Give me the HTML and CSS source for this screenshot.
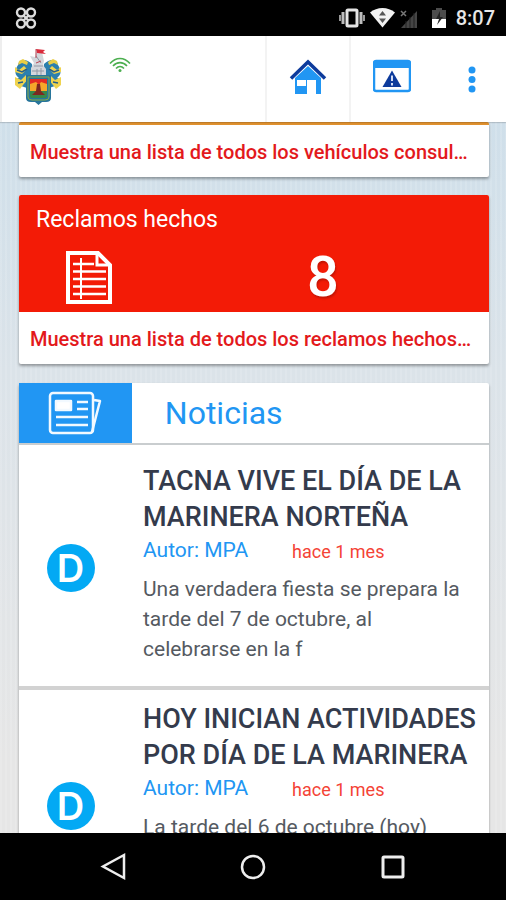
FILE: index.html
```
<!DOCTYPE html>
<html lang="es">
  <head>
    <meta charset="UTF-8" />
    <meta name="viewport" content="width=device-width, initial-scale=1.0" />
    <title>Noticias</title>
    <link rel="stylesheet" href="styles.css" />
  </head>
  <body>
    <div class="status-bar">
      <svg class="clover" width="26" height="24" viewBox="0 0 26 24" fill="none" stroke="#dcdcdc" stroke-width="2.4">
        <circle cx="8" cy="6.500" r="4" />
        <circle cx="18" cy="6.500" r="4" />
        <circle cx="8" cy="17.500" r="4" />
        <circle cx="18" cy="17.500" r="4" />
        <path d="M10 9l6 6M16 9l-6 6" />
      </svg>
      <div class="status-icons">
        <!-- vibrate -->
        <svg width="28" height="22" viewBox="0 0 28 22" fill="none">
          <rect x="9" y="3" width="10" height="16" rx="1" stroke="#e4e4e4" stroke-width="3" />
          <path d="M5 5v12M23 5v12" stroke="#bdbdbd" stroke-width="3" />
          <path d="M2 8v6M26 8v6" stroke="#9a9a9a" stroke-width="2" />
        </svg>
        <!-- wifi with traffic arrows -->
        <svg width="25" height="22" viewBox="0 0 25 22">
          <path d="M0 5.500C7-.500 18-.500 25 5.500L12.500 20.500z" fill="#f2f2f2" />
          <path d="M12.500 4l3.500 4.500H9zM12.500 16L9 11.500h7z" fill="#555" />
        </svg>
        <!-- no signal -->
        <svg width="20" height="22" viewBox="0 0 20 22">
          <path d="M18 4v17H2z" fill="#454545" />
          <path d="M7 14v7M11 10v11M15 6v15" stroke="#222" stroke-width="1" />
          <path d="M2 4l5 5M7 4l-5 5" stroke="#777" stroke-width="1.500" />
        </svg>
        <!-- battery -->
        <svg class="battery" width="16" height="22" viewBox="0 0 16 22">
          <path d="M1 3h4V1h6v2h4v9H1z" fill="#4c4c4c" />
          <path d="M1 12h14v9H1z" fill="#fff" />
          <path d="M9 4l-4 8h3l-2 6 6-8H9z" fill="#222" />
        </svg>
        <span class="clock">8:07</span>
      </div>
    </div>

    <header>
      <a class="logo" href="#" aria-label="Municipalidad">
        <svg width="48" height="58" viewBox="0 0 48 58">
          <!-- mantling -->
          <path d="M18 16C12 10 5 11 4 17c-4 6-3 10 1 13-5 1-4 9 2 8l6 2 6-14z" fill="#2b7fae" />
          <path d="M30 16c6-6 13-5 14 1 4 6 3 10-1 13 5 1 4 9-2 8l-6 2-6-14z" fill="#2b7fae" />
          <path d="M5 13l4-2 5 3-1 3-5-2-4 2zM43 13l-4-2-5 3 1 3 5-2 4 2z" fill="#e9cd45" />
          <path d="M1 19l4 3 5-4 3 3-5 5-7-2zM47 19l-4 3-5-4-3 3 5 5 7-2zM1 29l6 3 5-5 2 4-5 6-3 4-5-4zM47 29l-6 3-5-5-2 4 5 6 3 4 5-4z" fill="#efd34f" />
          <path d="M3 22l5 2 5-3M45 22l-5 2-5-3M4 35l5-1M44 35l-5-1" stroke="#245f8b" stroke-width="1.500" fill="none" />
          <!-- helmet, castle and flag -->
          <path d="M17 28v-8l3-5-4-7 5 1 1-5h6l2 9-1 4 3 4v7z" fill="#d4d7dc" />
          <path d="M20 18h9M18 23h12M22 8l5 7M23 21v6M27 20v7" stroke="#9298a5" stroke-width="1" />
          <path d="M22 1l9 1-2 2 3 2-9-1z" fill="#d92a3b" />
          <path d="M22 1v9M22 15l5-2" stroke="#b94755" stroke-width="1" />
          <!-- shield -->
          <path d="M12 27h25v23q0 4-5 4h-4l-3.500 3L21 54h-4q-5 0-5-4z" fill="#27759b" />
          <path d="M14 29h21v20q0 3-4 3H18q-4 0-4-3z" fill="none" stroke="#8bad46" stroke-width="1" />
          <path d="M16 31h17v12H16z" fill="#f6a72a" />
          <path d="M16 31h17v5l-6-2-2 3-3-3-6 2z" fill="#e42b24" />
          <path d="M16 43h17v5q0 2-3 2H19q-3 0-3-2z" fill="#35874a" />
          <path d="M23 36h3l1 7 4 4H18l4-4z" fill="#7d2820" />
        </svg>
      </a>
      <svg class="wifi" width="22" height="16" viewBox="0 0 22 16" fill="none" stroke="#4caf50" stroke-width="1.600">
        <path d="M1 6.500C7-.200 15-.200 21 6.500M4 9c4-4.500 10-4.500 14 0M7 11.500c2.500-2.700 5.500-2.700 8 0" />
        <circle cx="11" cy="13.500" r="1.500" fill="#4caf50" stroke="none" />
      </svg>
      <nav>
        <button type="button" aria-label="Inicio">
          <svg width="38" height="36" viewBox="0 0 38 36">
            <path d="M6 19L19 7l13 12v16h-5V21h-9v14H6z" fill="#2196f3" />
            <path d="M8 21h9v6H8z" fill="#fff" />
            <path d="M2 19.500L19 3l17 16.500" fill="none" stroke="#0d3b9c" stroke-width="3.500" />
          </svg>
        </button>
        <button type="button" aria-label="Alertas">
          <svg width="38" height="34" viewBox="0 0 38 34">
            <rect x="1" y="2" width="36" height="30" rx="2" fill="#fff" stroke="#2196f3" stroke-width="2.500" />
            <path d="M1 2h36v7H1z" fill="#2196f3" />
            <path d="M19 11.500L28.500 28h-19z" fill="#0d3b9c" />
            <path d="M19 16.500v5.500M19 24v2.500" stroke="#d5def4" stroke-width="2" />
          </svg>
        </button>
        <button type="button" class="more" aria-label="Menú">
          <svg width="8" height="28" viewBox="0 0 8 28" fill="#2196f3">
            <circle cx="4" cy="4" r="3.500" />
            <circle cx="4" cy="13.500" r="3.500" />
            <circle cx="4" cy="23" r="3.500" />
          </svg>
        </button>
      </nav>
    </header>

    <main>
      <section class="card vehicles">
        <p class="card-note">Muestra una lista de todos los vehículos consul…</p>
      </section>

      <section class="card claims">
        <div class="claims-head">
          <h2>Reclamos hechos</h2>
          <div class="claims-body">
            <svg width="46" height="53" viewBox="0 0 46 53" fill="none" stroke="#fff">
              <path d="M2 2h30l12 12v37H2z" stroke-width="4" />
              <path d="M31 2v12h13" stroke-width="3" />
              <path d="M7 13h21M7 20.500h33M7 28h33M7 35.500h33M7 43h33" stroke-width="2.400" />
              <path d="M15 7v41" stroke-width="2" />
            </svg>
            <strong>8</strong>
          </div>
        </div>
        <p class="card-note">Muestra una lista de todos los reclamos hechos…</p>
      </section>

      <section class="card news">
        <div class="news-head">
          <div class="news-icon">
            <svg width="54" height="44" viewBox="0 0 54 44" fill="none" stroke="#f2f9ff" stroke-width="2.500" stroke-linejoin="round">
              <rect x="2" y="2" width="43" height="40" rx="3" />
              <path d="M46 9l6 1-8 31" />
              <path d="M8 10h15v9H8z" fill="#fff" />
              <path d="M29 11h11M29 18h11M8 26h32M8 34h32" />
            </svg>
          </div>
          <h2>Noticias</h2>
        </div>

        <article>
          <div class="avatar"><span>D</span></div>
          <div class="news-text">
            <h3>TACNA VIVE EL DÍA DE LA MARINERA NORTEÑA</h3>
            <div class="meta">
              <a href="#">Autor: MPA</a>
              <time>hace 1 mes</time>
            </div>
            <p>Una verdadera fiesta se prepara la tarde del 7 de octubre, al celebrarse en la f</p>
          </div>
        </article>

        <article>
          <div class="avatar"><span>D</span></div>
          <div class="news-text">
            <h3>HOY INICIAN ACTIVIDADES POR DÍA DE LA MARINERA</h3>
            <div class="meta">
              <a href="#">Autor: MPA</a>
              <time>hace 1 mes</time>
            </div>
            <p>La tarde del 6 de octubre (hoy)</p>
          </div>
        </article>
      </section>
    </main>

    <footer>
      <button type="button" aria-label="Atrás">
        <svg width="28" height="30" viewBox="0 0 28 30" fill="none" stroke="#eee" stroke-width="2.500">
          <path d="M25 3v23L4 14.500z" />
        </svg>
      </button>
      <button type="button" aria-label="Pantalla principal">
        <svg width="28" height="30" viewBox="0 0 28 30" fill="none" stroke="#eee" stroke-width="2.500">
          <circle cx="14" cy="15" r="11" />
        </svg>
      </button>
      <button type="button" aria-label="Recientes">
        <svg width="28" height="30" viewBox="0 0 28 30" fill="none" stroke="#eee" stroke-width="3">
          <rect x="4" y="5" width="20" height="20" rx="1" />
        </svg>
      </button>
    </footer>
  </body>
</html>
```
FILE: styles.css
```
* {
  margin: 0;
  padding: 0;
  box-sizing: border-box;
}

body {
  display: flex;
  flex-direction: column;
  height: 100vh;
  overflow: hidden;
  font-family: Roboto, "Liberation Sans", sans-serif;
}

svg {
  display: block;
  flex-shrink: 0;
}

button {
  border: none;
  background: none;
}

a {
  text-decoration: none;
  color: #2196f3;
}

.status-bar {
  display: flex;
  align-items: center;
  justify-content: space-between;
  flex-shrink: 0;
  height: 36px;
  padding: 0 11px 0 13px;
  background-color: #000;
}

.status-icons {
  display: flex;
  align-items: center;
  gap: 4px;
}

.battery {
  margin-left: 8px;
}

.clock {
  margin-left: 5px;
  font-size: 20px;
  font-weight: 500;
  color: #e6e6e6;
}

header {
  position: relative;
  display: flex;
  flex-shrink: 0;
  height: 86px;
  padding-left: 12px;
  border-left: 2px solid #eee;
  background-color: #fff;
  box-shadow: 0 1px 1px rgba(0, 0, 0, 0.15);
}

.logo {
  margin-top: 12px;
}

.wifi {
  margin: 21px 0 0 47px;
}

nav {
  display: flex;
  margin-left: auto;
}

nav button {
  display: flex;
  justify-content: center;
  width: 84px;
  padding-top: 23px;
  border-left: 2px solid #f3f3f3;
}

nav .more {
  width: 73px;
  padding: 30px 0 0 4px;
  border: none;
}

main {
  flex: 1;
  min-height: 0;
  overflow: hidden;
  padding: 0 17px 0 19px;
  background-image: repeating-linear-gradient(90deg, rgba(255, 255, 255, 0.12) 0 2px, transparent 2px 5px),
    linear-gradient(#cfdfea, #dbe3e9 35%, #e6e6e6 90%);
}

.card {
  margin-bottom: 18px;
  border-radius: 2px;
  background-color: #fff;
  box-shadow: 0 2px 3px rgba(0, 0, 0, 0.35);
}

.card-note {
  padding: 2px 11px 0;
  font-size: 20px;
  font-weight: 500;
  line-height: 50px;
  white-space: nowrap;
  overflow: hidden;
  color: #e3191c;
}

.vehicles {
  border-top: 3px solid #e0912f;
}

.claims-head {
  padding: 10px 17px 0;
  height: 117px;
  border-radius: 2px 2px 0 0;
  background-color: #f31b06;
  color: #fff;
}

.claims-head h2 {
  font-size: 23px;
  font-weight: 400;
  line-height: 30px;
}

.claims-body {
  display: grid;
  grid-template-columns: 1fr 1fr;
  align-items: center;
  padding: 12px 0 0 30px;
}

.claims-body strong {
  padding-left: 38px;
  font-size: 56px;
  font-weight: 500;
  line-height: 60px;
  text-shadow: 1px 2px 2px rgba(0, 0, 0, 0.2);
}

.news {
  margin-top: 19px;
}

.news-head {
  display: flex;
  height: 62px;
  border-bottom: 2px solid #c9cdcf;
}

.news-icon {
  display: flex;
  align-items: center;
  justify-content: center;
  width: 24%;
  background-color: #2196f3;
}

.news-head h2 {
  padding-left: 33px;
  font-size: 32px;
  font-weight: 400;
  line-height: 60px;
  color: #2196f3;
}

article {
  display: flex;
  padding: 11px 8px 22px 0;
  border-bottom: 4px solid #d2d2d2;
}

.news-head + article {
  padding-top: 18px;
}

.avatar {
  display: flex;
  justify-content: center;
  flex-shrink: 0;
  width: 103px;
  margin-right: 21px;
  padding-top: 81px;
}

.avatar span {
  width: 48px;
  height: 48px;
  border-radius: 50%;
  background-color: #03a9f4;
  font-family: Inter, sans-serif;
  font-size: 38px;
  font-weight: 600;
  line-height: 48px;
  text-align: center;
  color: #fff;
}

.news-text h3 {
  font-size: 27px;
  font-weight: 500;
  line-height: 36px;
  color: #343b4c;
}

.meta {
  display: flex;
  align-items: center;
  gap: 44px;
  height: 30px;
  margin-bottom: 9px;
  font-size: 21px;
}

.meta time {
  padding-top: 2px;
  font-size: 18px;
  color: #f44336;
}

.news-text p {
  padding-right: 12px;
  font-size: 21px;
  line-height: 30px;
  color: #555a61;
}

footer {
  display: flex;
  align-items: center;
  justify-content: center;
  gap: 112px;
  flex-shrink: 0;
  height: 67px;
  background-color: #000;
}
```
